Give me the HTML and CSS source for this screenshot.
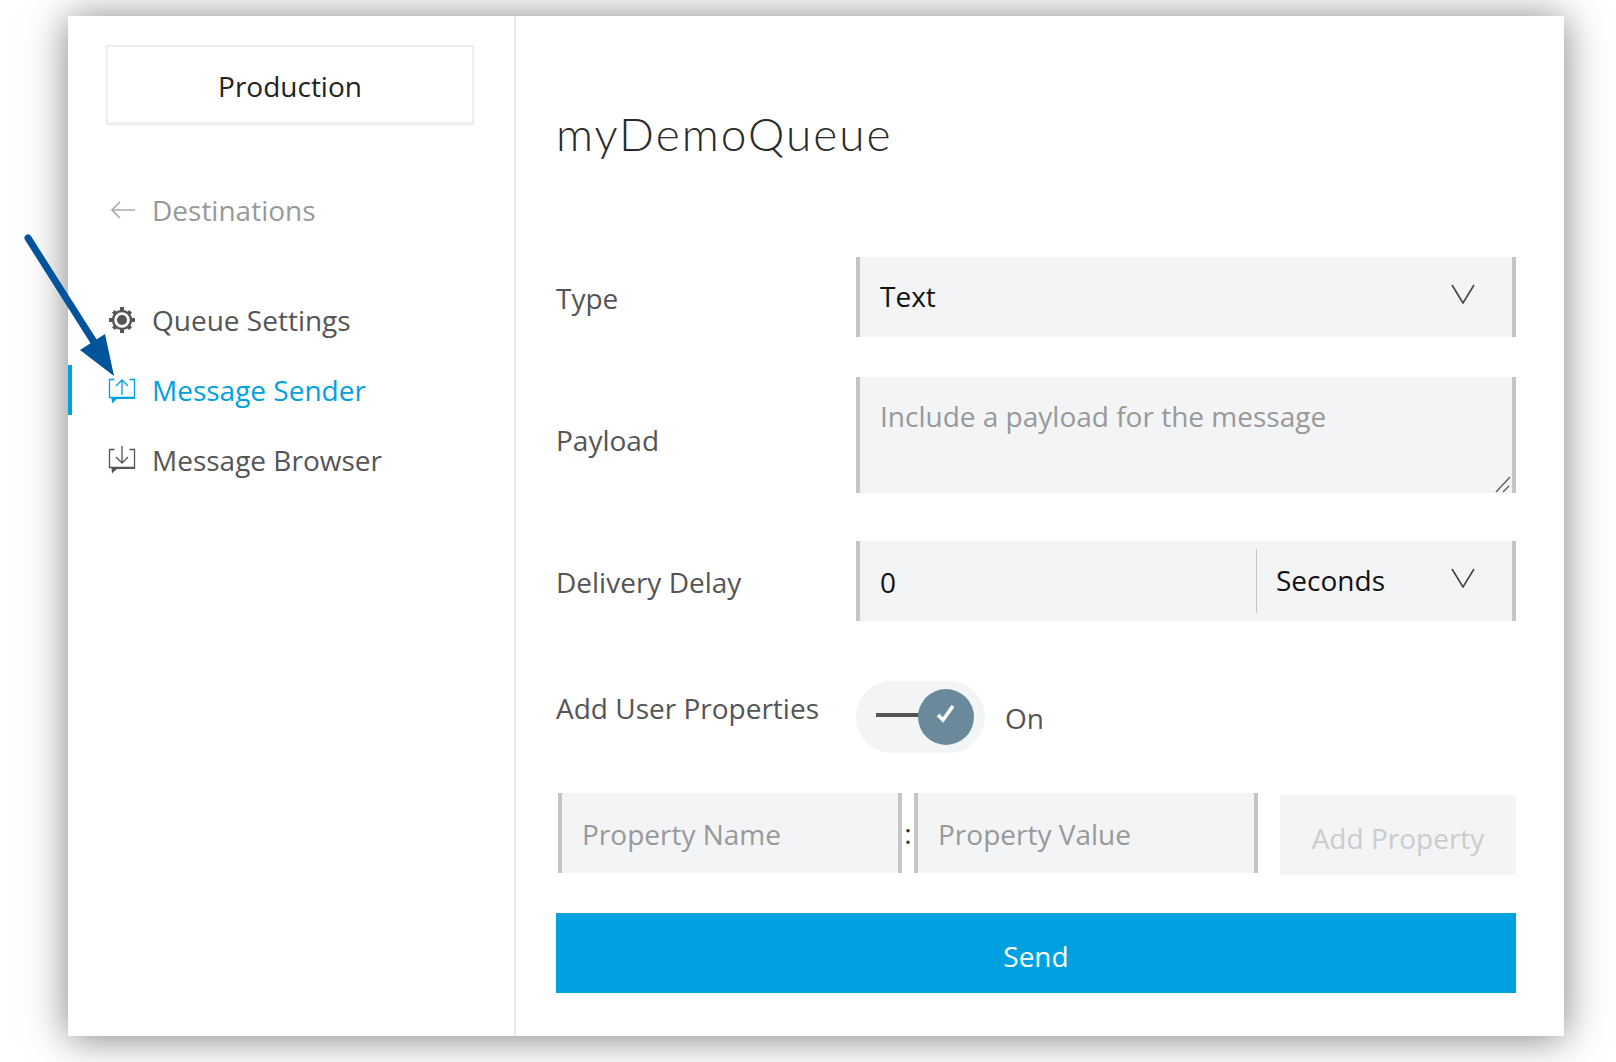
FILE: index.html
```html
<!DOCTYPE html>
<html lang="en">
<head>
    <meta charset="UTF-8">
    <meta name="viewport" content="width=device-width, initial-scale=1.0">
    <title>Message Sender</title>
    <link rel="stylesheet" href="styles.css">
</head>
<body>
    <div class="panel">
        <aside class="sidebar">
            <div class="service-name">Production</div>

            <a class="back-link">
                <svg class="nav-icon" viewBox="0 0 28 28" fill="none" stroke="currentColor" stroke-width="1.6"><path d="M26 14H3M11 6l-8 8 8 8"/></svg>
                Destinations
            </a>

            <nav class="side-nav">
                <a class="nav-item">
                    <svg class="nav-icon" viewBox="0 0 28 28"><circle cx="14" cy="14" r="9" fill="none" stroke="currentColor" stroke-width="2.4"/><circle cx="14" cy="14" r="5" fill="currentColor"/><path fill="currentColor" d="M12 1h4v4h-4zM12 23h4v4h-4zM1 12h4v4H1zM23 12h4v4h-4zM4 6.800 6.800 4l2.500 2.500-2.800 2.800zM18.700 21.500l2.800-2.800 2.500 2.500-2.800 2.800zM4 21.200l2.500-2.500 2.800 2.800L6.800 24zM18.700 6.500 21.200 4 24 6.800l-2.500 2.500z"/></svg>
                    Queue Settings
                </a>
                <a class="nav-item active">
                    <svg class="nav-icon" viewBox="0 0 28 28" fill="none" stroke="currentColor" stroke-width="1.3"><path d="M6.500 3.500H1.500v18h25v-18H21.500"/><path stroke-width="2" d="M8 22h19"/><path fill="currentColor" stroke="none" d="M3.500 21.500h7L4 27.500z"/><path d="M14 19V4.500M8 10l6-6 6 6"/></svg>
                    Message Sender
                </a>
                <a class="nav-item">
                    <svg class="nav-icon" viewBox="0 0 28 28" fill="none" stroke="currentColor" stroke-width="1.3"><path d="M6.500 3.500H1.500v18h25v-18H21.500"/><path stroke-width="2" d="M8 22h19"/><path fill="currentColor" stroke="none" d="M3.500 21.500h7L4 27.500z"/><path d="M14 0v16.500M8 11l6 6 6-6"/></svg>
                    Message Browser
                </a>
            </nav>
        </aside>

        <main class="content">
            <h1 class="queue-title">myDemoQueue</h1>

            <form class="send-form">
                <div class="form-row">
                    <label class="row-label">Type</label>
                    <div class="field select-field">
                        <span>Text</span>
                        <svg class="chevron" viewBox="0 0 24 20" fill="none" stroke="currentColor" stroke-width="1.6"><path d="M1 1l11 18L23 1"/></svg>
                    </div>
                </div>

                <div class="form-row payload-row">
                    <label class="row-label">Payload</label>
                    <div class="payload-wrap">
                        <textarea class="field payload" placeholder="Include a payload for the message"></textarea>
                        <svg class="resize-grip" viewBox="0 0 20 20" fill="none" stroke="#666" stroke-width="1.5"><path d="M4 19 18 4M11 19l6-6"/></svg>
                    </div>
                </div>

                <div class="form-row delay-row">
                    <label class="row-label">Delivery Delay</label>
                    <div class="field delay-field">
                        <input class="delay-input" type="text" value="0">
                        <div class="delay-unit">
                            <span>Seconds</span>
                            <svg class="chevron" viewBox="0 0 24 20" fill="none" stroke="currentColor" stroke-width="1.6"><path d="M1 1l11 18L23 1"/></svg>
                        </div>
                    </div>
                </div>

                <div class="form-row toggle-row">
                    <label class="row-label">Add User Properties</label>
                    <div class="toggle-wrap">
                        <div class="toggle">
                            <span class="toggle-line"></span>
                            <span class="toggle-knob">
                                <svg viewBox="0 0 24 24" fill="none" stroke="#fff" stroke-width="3.600"><path d="M4 13l5 5L19 4"/></svg>
                            </span>
                        </div>
                        <span class="toggle-text">On</span>
                    </div>
                </div>

                <div class="property-row">
                    <input class="field property-input" type="text" placeholder="Property Name">
                    <span class="colon">:</span>
                    <input class="field property-input" type="text" placeholder="Property Value">
                    <button class="add-property" type="button" disabled>Add Property</button>
                </div>

                <button class="send-button" type="button">Send</button>
            </form>
        </main>
    </div>

    <!-- annotation arrow drawn over the screenshot -->
    <svg class="callout" viewBox="0 0 100 150">
        <path d="M5 4 L71 108" stroke="#01549b" stroke-width="7" stroke-linecap="round" fill="none"/>
        <path d="M91 142 L57 116 L82 100 Z" fill="#01549b"/>
    </svg>
</body>
</html>
```

FILE: styles.css
```css
html, body {
    margin: 0;
    padding: 0;
    background-color: #fff;
    overflow: hidden;
}

body {
    font-family: "Open Sans", sans-serif;
    font-size: 28px;
    color: #555;
    padding: 16px 52px 26px 68px;
    height: 1020px;
}

.panel {
    display: flex;
    height: 1020px;
    background-color: #fff;
    box-shadow: 0 2px 38px rgba(0, 0, 0, 0.5);
}

/* sidebar */
.sidebar {
    width: 446px;
    flex: none;
    border-right: 2px solid #ebebeb;
}

.service-name {
    box-sizing: border-box;
    width: 368px;
    height: 79px;
    margin: 29px 0 0 38px;
    padding-top: 2px;
    display: flex;
    align-items: center;
    justify-content: center;
    background-color: #fff;
    border: 2px solid #eee;
    box-shadow: 0 1px 2px rgba(0, 0, 0, 0.1);
    color: #222;
}

.back-link {
    display: flex;
    align-items: center;
    height: 40px;
    margin: 66px 0 0 38px;
    color: #999;
}

.nav-icon {
    width: 28px;
    height: 28px;
    margin: 0 16px 0 2px;
    flex: none;
}

.back-link .nav-icon {
    color: #aaa;
    margin: 0 15px 0 3px;
}

.side-nav {
    margin-top: 65px;
}

.nav-item {
    display: flex;
    align-items: center;
    box-sizing: border-box;
    height: 50px;
    margin-bottom: 20px;
    padding-left: 38px;
    color: #555;
}

.nav-item.active {
    color: #00a1e0;
    border-left: 4px solid #00a1e0;
    padding-left: 34px;
}

/* main form */
.content {
    flex: 1;
    padding: 0 48px 0 40px;
}

.queue-title {
    margin: 82px 0 0;
    height: 72px;
    line-height: 72px;
    font-family: Lato, sans-serif;
    font-weight: 300;
    font-size: 46px;
    letter-spacing: 2px;
    color: #2a2a2a;
}

.send-form {
    margin-top: 87px;
}

.form-row {
    display: grid;
    grid-template-columns: 300px 1fr;
    align-items: center;
    margin-bottom: 40px;
}

.row-label {
    color: #555;
    padding-top: 2px;
}

.field {
    box-sizing: border-box;
    background-color: #f3f4f6;
    border: none;
    border-left: 4px solid #c4c5c7;
    border-right: 4px solid #c4c5c7;
    font: inherit;
    color: #111;
    outline: none;
}

.field::placeholder {
    color: #999;
    opacity: 1;
}

.select-field {
    display: flex;
    align-items: center;
    justify-content: space-between;
    height: 80px;
    padding: 0 37px 2px 20px;
}

.chevron {
    width: 24px;
    height: 20px;
    margin-bottom: 4px;
    color: #444;
}

.payload-row {
    margin-bottom: 48px;
}

.payload-row .row-label {
    padding-top: 10px;
}

.payload-wrap {
    position: relative;
}

.payload {
    display: block;
    width: 100%;
    height: 116px;
    padding: 20px;
    line-height: 38px;
    resize: none;
}

.resize-grip {
    position: absolute;
    right: 4px;
    bottom: 0;
    width: 20px;
    height: 20px;
}

.delay-row {
    margin-bottom: 60px;
}

.delay-field {
    display: flex;
    align-items: center;
    height: 80px;
}

.delay-input {
    box-sizing: border-box;
    width: 397px;
    height: 64px;
    padding: 2px 20px 0;
    background: transparent;
    border: none;
    border-right: 1px solid #c4c5c7;
    font: inherit;
    color: #111;
    outline: none;
}

.delay-unit {
    flex: 1;
    display: flex;
    align-items: center;
    justify-content: space-between;
    padding: 0 37px 2px 19px;
}

.toggle-row {
    height: 72px;
    margin-bottom: 40px;
}

.toggle-row .row-label {
    padding: 0 0 18px;
}

.toggle-wrap {
    display: flex;
    align-items: center;
    gap: 20px;
}

.toggle {
    position: relative;
    width: 129px;
    height: 72px;
    border-radius: 36px;
    background-color: #f3f4f6;
}

.toggle-line {
    position: absolute;
    left: 20px;
    top: 32px;
    width: 50px;
    height: 4px;
    background-color: #555;
}

.toggle-knob {
    position: absolute;
    left: 62px;
    top: 8px;
    width: 56px;
    height: 56px;
    border-radius: 50%;
    background-color: #6a8a9b;
    display: flex;
    align-items: center;
    justify-content: center;
}

.toggle-knob svg {
    width: 24px;
    height: 24px;
    margin-bottom: 6px;
}

.toggle-text {
    margin-top: 2px;
}

.property-row {
    display: flex;
    align-items: flex-start;
}

.property-input {
    width: 344px;
    height: 80px;
    padding: 2px 20px 0;
}

.property-input:first-child {
    margin-left: 2px;
}

.colon {
    width: 12px;
    height: 80px;
    line-height: 80px;
    text-align: center;
    color: #333;
}

.add-property {
    width: 236px;
    height: 80px;
    margin: 2px 0 0 22px;
    padding: 6px 0 0;
    border: none;
    background-color: #f3f4f6;
    font: inherit;
    color: #ccc;
}

.send-button {
    display: block;
    width: 100%;
    height: 80px;
    margin-top: 38px;
    padding: 6px 0 0;
    border: none;
    background-color: #00a1e0;
    color: #fff;
    font: inherit;
}

/* annotation */
.callout {
    position: absolute;
    left: 23px;
    top: 234px;
    width: 100px;
    height: 150px;
}
```
